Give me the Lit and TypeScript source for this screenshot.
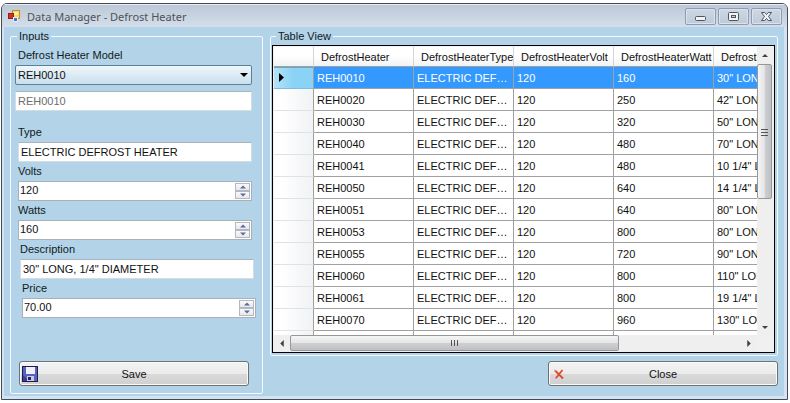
import { LitElement, html, css, svg } from "lit";
import { customElement, state } from "lit/decorators.js";
import { classMap } from "lit/directives/class-map.js";

interface Heater {
  model: string;
  type: string;
  volt: string;
  watt: string;
  description: string;
}

const TYPE = "ELECTRIC DEFROST HEATER";

const heater = (model: string, watt: string, description: string): Heater => ({
  model,
  type: TYPE,
  volt: "120",
  watt,
  description,
});

const HEATERS: Heater[] = [
  heater("REH0010", "160", '30" LONG, 1/4" DIAMETER'),
  heater("REH0020", "250", '42" LONG, 1/4" DIAMETER'),
  heater("REH0030", "320", '50" LONG, 1/4" DIAMETER'),
  heater("REH0040", "480", '70" LONG, 1/4" DIAMETER'),
  heater("REH0041", "480", '10 1/4" LONG'),
  heater("REH0050", "640", '14 1/4" LONG'),
  heater("REH0051", "640", '80" LONG, 1/4" DIAMETER'),
  heater("REH0053", "800", '80" LONG, 1/4" DIAMETER'),
  heater("REH0055", "720", '90" LONG, 1/4" DIAMETER'),
  heater("REH0060", "800", '110" LONG, 1/4" DIAMETER'),
  heater("REH0061", "800", '19 1/4" LONG'),
  heater("REH0070", "960", '130" LONG, 1/4" DIAMETER'),
];

const COLUMNS = [
  "DefrostHeater",
  "DefrostHeaterType",
  "DefrostHeaterVolt",
  "DefrostHeaterWatt",
  "DefrostHeaterDescription",
];

const ARROWS = {
  up: svg`<path d="M0 4 4 0 8 4Z" />`,
  down: svg`<path d="M0 0 8 0 4 4Z" />`,
  left: svg`<path d="M4 0 4 8 0 4Z" />`,
  right: svg`<path d="M0 0 4 4 0 8Z" />`,
};

@customElement("spin-box")
export class SpinBox extends LitElement {
  static properties = {
    label: { type: String },
    value: { type: String },
  };

  declare label: string;
  declare value: string;

  static styles = css`
    :host {
      display: block;
    }
    .label {
      display: block;
      line-height: 19px;
    }
    .box {
      display: flex;
      height: 20px;
      box-sizing: border-box;
      border: 1px solid #a9b0b8;
      background: #fff;
    }
    .text {
      flex: 1;
      min-width: 0;
      padding: 0 0 2px 1px;
      border: 0;
      outline: 0;
      background: none;
      color: #111;
      font: inherit;
    }
    .buttons {
      display: flex;
      flex-direction: column;
      width: 15px;
      padding: 1px;
    }
    .step {
      display: flex;
      flex: 1;
      align-items: center;
      justify-content: center;
      padding: 0;
      border: 1px solid #b4b8c0;
      background: linear-gradient(#fafafa, #e6e8ee);
    }
    .arrow {
      width: 6px;
      height: 4px;
      fill: #5b6a9c;
    }
  `;

  private step(by: number) {
    const decimals = (this.value.split(".")[1] ?? "").length;
    this.value = (Number(this.value) + by).toFixed(decimals);
  }

  render() {
    return html`
      <label class="label" for="value">${this.label}</label>
      <div class="box">
        <input id="value" class="text" inputmode="decimal" .value=${this.value} />
        <div class="buttons">
          <button class="step" aria-label="Increase" @click=${() => this.step(1)}>
            <svg class="arrow" viewBox="0 0 8 4">${ARROWS.up}</svg>
          </button>
          <button class="step" aria-label="Decrease" @click=${() => this.step(-1)}>
            <svg class="arrow" viewBox="0 0 8 4">${ARROWS.down}</svg>
          </button>
        </div>
      </div>
    `;
  }
}

@customElement("app-root")
export class AppRoot extends LitElement {
  @state() private selected = 0;

  static styles = css`
    :host {
      display: flex;
      min-height: 100vh;
      box-sizing: border-box;
      padding: 3px 2px 3px 1px;
      background: #fff;
      color: #111a22;
      font: 11px "Liberation Sans", Arial, sans-serif;
    }
    .window {
      display: flex;
      flex: 1;
      flex-direction: column;
      min-width: 0;
      border: 1px solid #454b55;
      border-radius: 6px 6px 0 0;
      background: #d3e3f1;
      overflow: hidden;
    }
    .titlebar {
      display: flex;
      align-items: flex-start;
      height: 23px;
      padding: 0 5px 0 5px;
      background: linear-gradient(#bcc8d6, #d3deea);
      box-shadow: inset 0 1px #e6ecf3;
    }
    .app-icon {
      width: 14px;
      height: 14px;
      margin-top: 5px;
    }
    .title {
      flex: 1;
      margin: 0 0 0 6px;
      color: #4d5258;
      font: 11px/26px "Noto Sans", "Open Sans", sans-serif;
    }
    .caption-buttons {
      display: flex;
      gap: 2px;
      padding-top: 4px;
    }
    .caption {
      display: flex;
      align-items: center;
      justify-content: center;
      width: 31px;
      height: 17px;
      padding: 0;
      border: 1px solid #8e9bb0;
      border-radius: 2px;
      background: linear-gradient(#ced8e4, #bdcad9);
      box-shadow: inset 0 0 0 1px #dbe4ee;
    }
    .caption-icon {
      width: 13px;
      height: 11px;
    }
    .client {
      display: grid;
      flex: 1;
      grid-template-columns: 253px minmax(0, 1fr);
      gap: 7px;
      margin: 0 3px 3px 2px;
      padding: 2px 6px 2px 6px;
      background: #b3d3e8;
    }
    .group {
      min-width: 0;
      margin: 0;
      border: 1px solid #f4fafd;
      border-radius: 2px;
    }
    .legend {
      padding: 0 2px;
      line-height: 14px;
    }
    .inputs {
      display: flex;
      flex-direction: column;
      padding: 3px 6px 7px 4px;
    }
    .inputs .legend {
      margin-left: 2px;
    }
    .view .legend {
      margin-left: 4px;
    }
    .fields {
      flex: 1;
      padding-left: 3px;
    }
    .label {
      display: block;
      line-height: 19px;
    }
    .text,
    .model {
      display: block;
      width: 100%;
      height: 20px;
      box-sizing: border-box;
      padding: 0 2px;
      border: 1px solid #d3dde6;
      border-top-color: #a9b4be;
      border-radius: 1px;
      background: #fff;
      color: #111;
      font: inherit;
    }
    .lookup {
      margin: 0 0 12px 0;
      padding-right: 4px;
    }
    .lookup .label {
      padding-left: 3px;
    }
    .select-wrap {
      display: grid;
      align-items: center;
      margin-bottom: 6px;
    }
    .select-wrap > * {
      grid-area: 1 / 1;
    }
    .model {
      appearance: none;
      border: 1px solid #5a8296;
      border-radius: 2px;
      background: linear-gradient(#f0f7fb, #dcebf4 50%, #c9dfec);
    }
    .model-arrow {
      justify-self: end;
      width: 8px;
      height: 4px;
      margin-right: 4px;
      fill: #000;
      pointer-events: none;
    }
    .text:disabled {
      color: #6d6d6d;
    }
    .field {
      width: 234px;
    }
    .nudge {
      margin-left: 2px;
    }
    .nudge-more {
      margin-left: 4px;
    }
    .command {
      display: grid;
      grid-template-columns: 16px 1fr 16px;
      align-items: center;
      width: 230px;
      height: 25px;
      padding: 0 2px;
      border: 1px solid #707070;
      border-radius: 3px;
      background: linear-gradient(#f3f3f3, #ebebeb 50%, #dadada 51%, #cfcfcf);
      box-shadow: inset 0 0 0 1px #fbfbfb;
      color: #111;
      font: inherit;
    }
    .save {
      margin-left: 4px;
    }
    .command-icon {
      width: 16px;
      height: 16px;
    }
    .right {
      display: flex;
      flex-direction: column;
      min-width: 0;
      gap: 5px;
      padding-bottom: 8px;
    }
    .view {
      display: flex;
      flex: 1;
      padding: 2px 2px 2px 1px;
    }
    .grid {
      display: grid;
      flex: 1;
      grid-template: minmax(0, 1fr) 16px / minmax(0, 1fr) 16px;
      min-width: 0;
      border: 1px solid #000;
      padding: 1px;
      background: #f0f0f0;
    }
    .pane {
      height: 0;
      min-height: 100%;
      overflow: hidden;
      background: #fff;
    }
    .table {
      width: 540px;
      border-collapse: separate;
      border-spacing: 0;
      table-layout: fixed;
      color: #111;
    }
    .corner {
      width: 40px;
    }
    .head,
    .cell,
    .row-head {
      box-sizing: border-box;
      overflow: hidden;
      border: 0 solid #a0a0a0;
      border-width: 0 1px 1px 0;
      font-weight: normal;
      text-align: left;
      white-space: nowrap;
    }
    .head {
      height: 20px;
      padding: 0 0 0 7px;
      border-color: #d5d5d5;
      border-bottom-color: #a0a0a0;
      background: linear-gradient(#fff 45%, #f1f2f4);
    }
    .cell {
      height: 22px;
      padding: 0 3px;
      text-overflow: ellipsis;
    }
    .cell.clip {
      text-overflow: clip;
    }
    .row-head {
      padding: 0 0 0 5px;
      border-bottom-color: #e0e3e6;
      background: linear-gradient(90deg, #fff 20%, #f1f2f4);
    }
    .row-arrow {
      display: block;
      width: 5px;
      height: 9px;
    }
    .selected .cell {
      background: #3399ff;
      color: #fff;
    }
    .selected .row-head {
      border-bottom-color: #79bfe0;
      background: linear-gradient(90deg, #b5e2f7, #8bd3f6 50%, #8bd3f6);
      box-shadow: inset 0 1px #69a8c4;
    }
    .scroll-v,
    .scroll-h {
      display: flex;
      background: #efefef;
    }
    .scroll-v {
      flex-direction: column;
    }
    .scroll-button {
      display: flex;
      flex: none;
      align-items: center;
      justify-content: center;
      width: 16px;
      height: 16px;
      padding: 0;
      border: 0;
      background: none;
      fill: #404040;
    }
    .tri-v {
      width: 6px;
      height: 3px;
    }
    .tri-h {
      width: 4px;
      height: 7px;
    }
    .track {
      display: flex;
      flex: 1;
    }
    .scroll-v .track {
      flex-direction: column;
      padding-top: 1px;
    }
    .thumb {
      display: flex;
      align-items: center;
      justify-content: center;
      box-sizing: border-box;
      border: 1px solid #979797;
      border-radius: 2px;
    }
    .scroll-v .thumb {
      height: 53%;
      margin-right: 1px;
      background: linear-gradient(90deg, #f5f5f5, #e4e4e6 50%, #cfd0d2 51%, #bfc0c4);
    }
    .scroll-h .thumb {
      width: 73%;
      background: linear-gradient(#f5f5f5, #e4e4e6 50%, #cfd0d2 51%, #bfc0c4);
    }
    .grip {
      width: 8px;
      height: 8px;
      stroke: #555;
    }
    .close {
      align-self: flex-end;
    }
  `;

  render() {
    const current = HEATERS[this.selected];
    return html`
      <main class="window">
        <header class="titlebar">
          <svg class="app-icon" viewBox="0 0 14 14">
            <rect x="5.5" y="1.5" width="7" height="8" fill="#f9d65c" stroke="#c1932a" />
            <rect x="7" y="3" width="4" height="3" fill="#fdeea8" />
            <rect x="1.5" y="4.5" width="5" height="5" fill="#cf3224" stroke="#9c1f16" />
            <rect x="6.5" y="8.5" width="4" height="4" fill="#4a77d4" stroke="#e6eefb" />
          </svg>
          <h1 class="title">Data Manager - Defrost Heater</h1>
          <div class="caption-buttons">
            <button class="caption" aria-label="Minimize">
              <svg class="caption-icon" viewBox="0 0 13 11">
                <rect x="1.5" y="5.5" width="10" height="4" rx="1" fill="#f2f2f2" stroke="#4e5460" />
              </svg>
            </button>
            <button class="caption" aria-label="Maximize">
              <svg class="caption-icon" viewBox="0 0 13 11">
                <rect x="1.5" y="1.5" width="10" height="8" rx="1" fill="#f2f2f2" stroke="#4e5460" />
                <rect x="4.5" y="4.5" width="4" height="2" fill="#c5d0dd" stroke="#4e5460" />
              </svg>
            </button>
            <button class="caption" aria-label="Close window">
              <svg class="caption-icon" viewBox="0 0 13 11">
                <path
                  d="M1.5 1.5H4.7L6.5 3.5 8.3 1.5H11.5L8.5 5.5 11.5 9.5H8.3L6.5 7.5 4.7 9.5H1.5L4.5 5.5Z"
                  fill="#f2f2f2"
                  stroke="#4e5460"
                />
              </svg>
            </button>
          </div>
        </header>

        <div class="client">
          <fieldset class="group inputs">
            <legend class="legend">Inputs</legend>
            <div class="lookup">
              <label class="label" for="model">Defrost Heater Model</label>
              <div class="select-wrap">
                <select
                  id="model"
                  class="model"
                  @change=${(e: Event) => (this.selected = (e.target as HTMLSelectElement).selectedIndex)}
                >
                  ${HEATERS.map((h, i) => html`<option ?selected=${i === this.selected}>${h.model}</option>`)}
                </select>
                <svg class="model-arrow" viewBox="0 0 8 4">${ARROWS.down}</svg>
              </div>
              <input class="text" aria-label="Selected model" disabled .value=${current.model} />
            </div>
            <div class="fields">
              <div class="field">
                <label class="label" for="type">Type</label>
                <input id="type" class="text" .value=${current.type} />
              </div>
              <spin-box class="field" label="Volts" value=${current.volt}></spin-box>
              <spin-box class="field" label="Watts" value=${current.watt}></spin-box>
              <div class="field nudge">
                <label class="label" for="description">Description</label>
                <input id="description" class="text" .value=${current.description} />
              </div>
              <spin-box class="field nudge-more" label="Price" value="70.00"></spin-box>
            </div>
            <button class="command save">
              <svg class="command-icon" viewBox="0 0 16 16">
                <rect x="0.5" y="0.5" width="15" height="15" fill="#5a60c0" stroke="#1c1e50" />
                <rect x="4" y="1" width="9" height="7" fill="#eef1fb" />
                <path d="M1 15V9L7 15Z" fill="#3a3e98" />
                <rect x="5" y="10" width="7" height="5" fill="#c9cce0" />
                <rect x="6" y="11" width="3" height="3" fill="#1e2060" />
              </svg>
              <span>Save</span>
            </button>
          </fieldset>

          <div class="right">
            <fieldset class="group view">
              <legend class="legend">Table View</legend>
              <div class="grid">
                <div class="pane">
                  <table class="table">
                    <thead>
                      <tr>
                        <th class="head corner" aria-label="Row"></th>
                        ${COLUMNS.map((c) => html`<th class="head">${c}</th>`)}
                      </tr>
                    </thead>
                    <tbody>
                      ${HEATERS.map((h, i) => this.row(h, i))}
                      <tr>
                        <th class="row-head" aria-label="New row"></th>
                        ${COLUMNS.map(() => html`<td class="cell"></td>`)}
                      </tr>
                    </tbody>
                  </table>
                </div>
                <div class="scroll-v">
                  <button class="scroll-button" aria-label="Scroll up">
                    <svg class="tri-v" viewBox="0 0 8 4">${ARROWS.up}</svg>
                  </button>
                  <div class="track">
                    <div class="thumb">
                      <svg class="grip" viewBox="0 0 8 8"><path d="M0 1.5H7M0 4.5H7M0 7.5H7" /></svg>
                    </div>
                  </div>
                  <button class="scroll-button" aria-label="Scroll down">
                    <svg class="tri-v" viewBox="0 0 8 4">${ARROWS.down}</svg>
                  </button>
                </div>
                <div class="scroll-h">
                  <button class="scroll-button" aria-label="Scroll left">
                    <svg class="tri-h" viewBox="0 0 4 8">${ARROWS.left}</svg>
                  </button>
                  <div class="track">
                    <div class="thumb">
                      <svg class="grip" viewBox="0 0 8 8"><path d="M0.5 1V7M3.5 1V7M6.5 1V7" /></svg>
                    </div>
                  </div>
                  <button class="scroll-button" aria-label="Scroll right">
                    <svg class="tri-h" viewBox="0 0 4 8">${ARROWS.right}</svg>
                  </button>
                </div>
              </div>
            </fieldset>
            <button class="command close">
              <svg class="command-icon" viewBox="0 0 16 16">
                <path d="M4 4.5 12 12.5M11.5 4 5 12" fill="none" stroke="#e0492f" stroke-width="1.8" />
                <path d="M3 4 5 5M5 12 4 13" fill="none" stroke="#f0907c" />
              </svg>
              <span>Close</span>
            </button>
          </div>
        </div>
      </main>
    `;
  }

  private row(h: Heater, i: number) {
    const active = i === this.selected;
    return html`
      <tr class=${classMap({ selected: active })} @click=${() => (this.selected = i)}>
        <th class="row-head" scope="row" aria-label=${h.model}>
          ${active
            ? html`<svg class="row-arrow" viewBox="0 0 5 9"><path d="M0 0 5 4.5 0 9Z" /></svg>`
            : ""}
        </th>
        <td class="cell">${h.model}</td>
        <td class="cell">${h.type}</td>
        <td class="cell">${h.volt}</td>
        <td class="cell">${h.watt}</td>
        <td class="cell clip">${h.description}</td>
      </tr>
    `;
  }
}
